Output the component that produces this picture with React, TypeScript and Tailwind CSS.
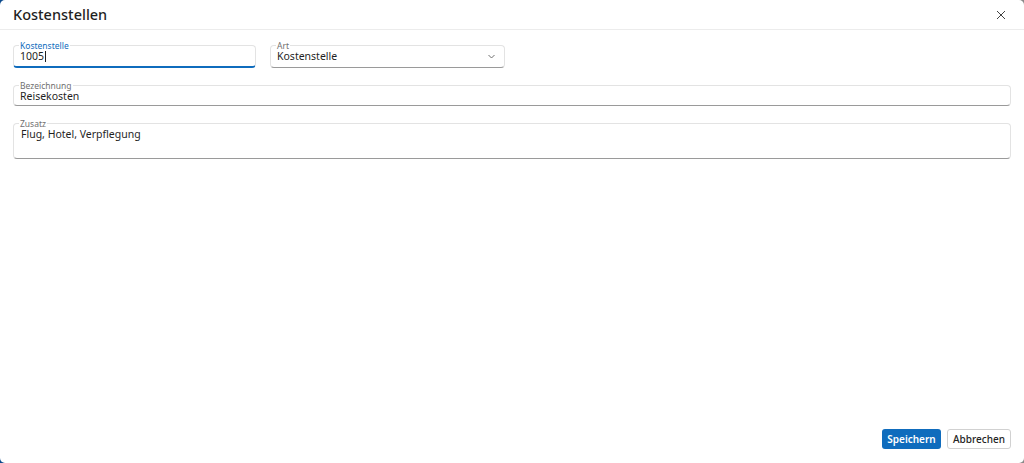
import React from "react";

const font = { fontFamily: '"Noto Sans", "Open Sans", sans-serif' };

function Field({
  label,
  focused,
  className,
  children,
}: {
  label: string;
  focused?: boolean;
  className?: string;
  children: React.ReactNode;
}) {
  return (
    <fieldset
      className={`relative m-0 min-w-0 rounded-[4px] border border-[#e3e3e3] px-[6px] pb-0 pt-0 ${
        focused ? "border-b-2 border-b-[#0f6cbd]" : "border-b border-b-[#9a9a9a]"
      } ${className ?? ""}`}
    >
      <legend
        className={`-ml-[1px] px-[1px] text-[8.5px] leading-[11px] ${
          focused ? "text-[#0f6cbd]" : "text-[#707070]"
        }`}
      >
        {label}
      </legend>
      <div className="-mt-[2px]">{children}</div>
    </fieldset>
  );
}

export default function App() {
  return (
    <div
      className="h-[463px] w-[1024px] bg-[linear-gradient(90deg,#0c4a8c,#8a8a8a)]"
      style={font}
    >
      <div className="flex h-full w-full flex-col rounded-[5px] bg-white">
        <div className="flex h-[30px] items-center justify-between border-b border-[#ececec] pl-[13px] pr-[18px]">
          <span className="text-[14.5px] font-medium leading-none text-[#1f1f1f]">Kostenstellen</span>
          <svg width="10" height="10" viewBox="0 0 10 10" className="text-[#424242]">
            <path d="M1 1 L9 9 M9 1 L1 9" stroke="currentColor" strokeWidth="1" fill="none" />
          </svg>
        </div>
        <div className="flex flex-1 flex-col gap-[12px] px-[13px] pt-[10px]">
          <div className="flex gap-[14px]">
            <Field label="Kostenstelle" focused className="h-[28px] w-[243px]">
              <div className="flex items-center text-[10.5px] leading-[14px] text-[#1f1f1f]">
                1005
                <span className="ml-[1px] inline-block h-[11px] w-[1px] bg-[#1f1f1f]" />
              </div>
            </Field>
            <Field label="Art" className="h-[28px] w-[235px]">
              <div className="flex items-center justify-between text-[10.5px] leading-[14px] text-[#1f1f1f]">
                <span>Kostenstelle</span>
                <svg width="7" height="5" viewBox="0 0 7 5" className="mr-[3px] text-[#616161]">
                  <path d="M0.5 1 L3.5 4 L6.5 1" stroke="currentColor" strokeWidth="0.9" fill="none" />
                </svg>
              </div>
            </Field>
          </div>
          <Field label="Bezeichnung" className="h-[26px] w-full">
            <div className="text-[10.5px] leading-[14px] text-[#1f1f1f]">Reisekosten</div>
          </Field>
          <Field label="Zusatz" className="h-[41px] w-full">
            <div className="pl-[1px] text-[10.5px] leading-[14px] text-[#1f1f1f]">Flug, Hotel, Verpflegung</div>
          </Field>
        </div>
        <div className="flex justify-end gap-[6px] px-[13px] pb-[14px]">
          <button className="h-[20px] w-[59px] rounded-[3px] bg-[#0f6cbd] text-[10px] font-semibold leading-none text-white">
            Speichern
          </button>
          <button className="h-[20px] w-[64px] rounded-[3px] border border-[#d1d1d1] bg-white text-[10px] font-medium leading-none text-[#242424]">
            Abbrechen
          </button>
        </div>
      </div>
    </div>
  );
}
